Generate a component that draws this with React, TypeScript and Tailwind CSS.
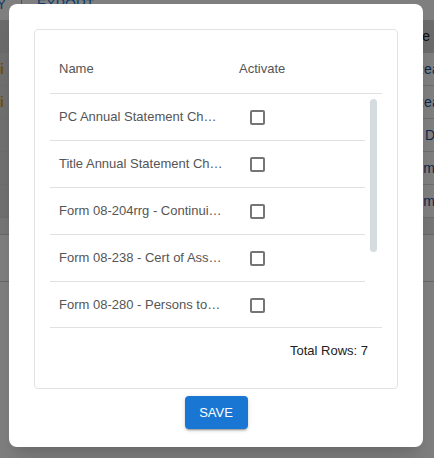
const forms = [
  "PC Annual Statement Checklist",
  "Title Annual Statement Checklist",
  "Form 08-204rrg - Continuing Care Certification",
  "Form 08-238 - Cert of Assumption Reinsurance",
  "Form 08-280 - Persons to Contact",
  "Form 08-301 - Premium Tax Summary",
  "Form 08-415 - Officer Listing",
];

const pageRows = [
  { flag: true, action: "Read", offset: "pl-[0px]" },
  { flag: true, action: "Read", offset: "pl-[0px]" },
  { flag: false, action: "Download", offset: "pl-[11px]" },
  { flag: false, action: "Email", offset: "pl-[0px]" },
  { flag: false, action: "Email", offset: "pl-[0px]" },
];

function Checkbox() {
  return <span className="block h-[15px] w-[15px] rounded-[2px] border-2 border-[#757575]" />;
}

export default function App() {
  return (
    <div className="relative h-[458px] w-full overflow-hidden bg-white font-['Liberation_Sans',Arial,sans-serif]">
      {/* Page behind the dialog */}
      <div className="-mt-[12px]">
        <div className="flex h-[32px] items-center text-[14px] font-medium text-[#1976d2]">
          <span className="flex w-[6px] justify-end whitespace-nowrap">HISTORY</span>
          <span className="ml-[15px] h-[22px] w-px bg-[#9e9e9e]" />
          <span className="ml-[15px]">EXPORT</span>
        </div>
        <div className="flex h-[33px] items-center justify-end bg-[#d6d6d6] pr-[4px] text-[14px] text-[#222]">
          Type
        </div>
        {pageRows.map((row, i) => (
          <div key={i} className="flex h-[33px] items-center border-b border-[#dadada] text-[14px]">
            <div className="flex h-full w-[10px] items-center bg-[#e0e0e0]">
              {row.flag && <span className="font-bold text-[#e3a008]">i</span>}
            </div>
            <div className="flex-1" />
            <div className={`w-[20px] whitespace-nowrap text-[#1a4fa0] ${row.offset}`}>{row.action}</div>
          </div>
        ))}
        <div className="h-[17px] border-b border-[#cfcfcf] bg-[#ececec]" />
        <div className="h-[47px] border-b border-[#cfcfcf]" />
      </div>

      {/* Dim layer */}
      <div className="absolute inset-0 bg-black/50" />

      {/* Dialog */}
      <div className="absolute left-[9px] top-[4px] flex w-[414px] flex-col items-center gap-[7px] rounded-[8px] bg-white px-[25px] pb-[18px] pt-[25px] shadow-xl">
        <div className="w-full rounded-[4px] border border-[#e2e2e2] p-[15px]">
          <div className="flex h-[49px] items-center border-b border-[#e0e0e0] text-[13px] text-[#555]">
            <div className="w-[180px] pl-[9px]">Name</div>
            <div className="pl-[9px]">Activate</div>
          </div>

          <div className="flex h-[234px] overflow-hidden border-b border-[#e0e0e0]">
            <div className="w-[315px] shrink-0">
              {forms.map(name => (
                <div key={name} className="flex h-[47px] items-center border-b border-[#e0e0e0] text-[13px] text-[#555]">
                  <div className="w-[180px] truncate pl-[9px] pr-[7px]">{name}</div>
                  <div className="pl-[20px]">
                    <Checkbox />
                  </div>
                </div>
              ))}
            </div>
            <div className="flex-1 pl-[5px] pt-[5px]">
              <div className="h-[153px] w-[7px] rounded-full bg-[#d5dce0]" />
            </div>
          </div>

          <div className="flex h-[45px] items-center justify-end pr-[14px] text-[13px] text-[#222]">Total Rows: 7</div>
        </div>

        <button className="flex h-[33px] w-[63px] items-center justify-center rounded-[4px] bg-[#1976d2] text-[13px] font-medium text-white shadow-[0_3px_1px_-2px_rgba(0,0,0,0.2),0_2px_2px_0_rgba(0,0,0,0.14),0_1px_5px_0_rgba(0,0,0,0.12)]">
          SAVE
        </button>
      </div>
    </div>
  );
}
